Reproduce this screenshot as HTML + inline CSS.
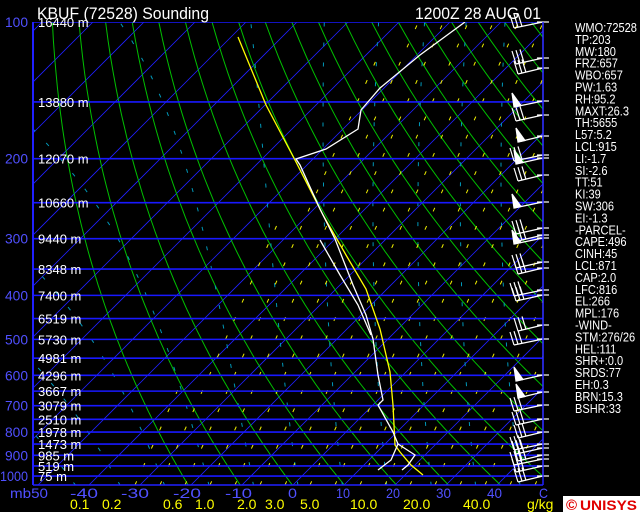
<!DOCTYPE html>
<html><head><meta charset="utf-8">
<style>
html,body{margin:0;padding:0;background:#000;width:640px;height:512px;overflow:hidden}
svg{display:block}
text{font-family:"Liberation Sans",sans-serif}
</style></head><body>
<svg id="s" width="640" height="512" viewBox="0 0 640 512" xmlns="http://www.w3.org/2000/svg">
<defs><clipPath id="c"><rect x="33" y="22" width="510" height="463"/></clipPath></defs>
<rect width="640" height="512" fill="#000"/>
<g id="grid" clip-path="url(#c)"></g>
<g id="prof" clip-path="url(#c)" fill="none" stroke-width="1.3">
<polyline stroke="#ffff00" points="238,37 266,105 296,162 323,215 346,255 366,289 380,329 390,372 393,405 395,445 400,452 411,465 423,475"/>
<polyline stroke="#fff" points="465,22 420,55 380,88 361,110 358,129 326,149 296,159 300,165 320,209 335,239 353,285 366,315 373,339 378,375 383,400 378,405 393,432 398,444 391,460 378,470"/>
<polyline stroke="#fff" points="320,240 340,275 358,305 371,335"/>
<polyline stroke="#fff" points="398,444 415,455 408,465 402,470"/>
</g>
<g id="wind" stroke="#fff" fill="none" stroke-width="1.2"></g>
<line x1="33" y1="22" x2="33" y2="485" stroke="#2020ff" stroke-width="2"/>
<line x1="33" y1="485" x2="543" y2="485" stroke="#2020ff" stroke-width="1.5"/>
<line x1="543" y1="22" x2="543" y2="485" stroke="#2020ff" stroke-width="1.5"/>
<g id="txt"></g>
<text x="37" y="19" fill="#fff" font-size="17" textLength="172" lengthAdjust="spacingAndGlyphs">KBUF (72528) Sounding</text>
<text x="415" y="19" fill="#fff" font-size="17" textLength="126" lengthAdjust="spacingAndGlyphs">1200Z 28 AUG 01</text>
<rect x="563" y="496" width="77" height="16" fill="#fff"/>
<text x="566" y="510" fill="#e00000" font-size="15" font-weight="bold" font-family="Liberation Serif">©</text>
<text x="580" y="510" fill="#e00000" font-size="14" font-weight="bold" font-family="Liberation Serif" textLength="57" lengthAdjust="spacingAndGlyphs">UNISYS</text>
</svg>
<script>
var NS="http://www.w3.org/2000/svg";
function el(p,t,a,tx){var e=document.createElementNS(NS,t);for(var k in a)e.setAttribute(k,a[k]);if(tx!=null)e.textContent=tx;p.appendChild(e);return e;}
var G=document.getElementById('grid'),T=document.getElementById('txt'),W=document.getElementById('wind');
function Y(p){return 22+197.2*Math.log(p/100);}
function X(t,p){return 293+5.1*t+(485-Y(p));}
function XG(tp,p){return -585.6+5.14*tp+0.524*(485-Y(p));}
function line(pts,c,w,dash){var s=pts.map(function(q){return q[0].toFixed(1)+","+q[1].toFixed(1)}).join(" ");var a={points:s,fill:"none",stroke:c,"stroke-width":w};if(dash)a["stroke-dasharray"]=dash;el(G,"polyline",a);}
// isotherms
for(var t=-140;t<=50;t+=10){line([[X(t,1050),Y(1050)],[X(t,100),Y(100)]],"#2020ff",0.8);}
// dry adiabats
for(var k=0;k<=30;k++){var th=148.6+10*k,pts=[];for(var p=1050;p>=100;p-=10){pts.push([XG(th*Math.pow(p/1000,0.286),p),Y(p)]);}line(pts,"#00c000",1);}
// moist adiabats
function es(tc){return 6.112*Math.exp(17.67*tc/(tc+243.5));}
for(var x0=40;x0<=540;x0+=45){var tp=(x0+585.6)/5.14/1.0132,tc=tp+150-273.15,pts=[];for(var p=1050;p>=100;p-=5){pts.push([XG(tc+273.15-150,p),Y(p)]);var tk=tc+273.15,e=es(tc),r=0.622*e/(p-e),L=2.5e6;var g=(287*tk+L*r)/(1004+L*L*r*0.622/(287*tk*tk))/p;tc-=g*5;if(tc<-120)break;}line(pts,"#0098b8",1,"4 16");}
// mixing ratio (yellow dashed)
for(var xb=60;xb<=760;xb+=25){
 var ytop=22;for(var y=485;y>=22;y--){var xl=xb+0.45*(485-y),bd=120+0.6*(485-y);if(xl<bd){ytop=y;break;}}
 if(ytop>=480)continue;
 line([[xb,485],[xb+0.45*(485-ytop),ytop]],"#f0f000",1,"4 16");}
// isobars & heights
var lv=[[100,"16440 m","100"],[150,"13880 m"],[200,"12070 m","200"],[250,"10660 m"],[300,"9440 m","300"],[350,"8348 m"],[400,"7400 m","400"],[450,"6519 m"],[500,"5730 m","500"],[550,"4981 m"],[600,"4296 m","600"],[650,"3667 m"],[700,"3079 m","700"],[750,"2510 m"],[800,"1978 m","800"],[850,"1473 m"],[900,"985 m","900"],[950,"519 m"],[1000,"75 m","1000"]];
lv.forEach(function(l){var y=Y(l[0]);el(G,"line",{x1:33,y1:y,x2:543,y2:y,stroke:"#1818ff","stroke-width":1.6});
el(T,"text",{x:38,y:y+5,fill:"#fff","font-size":13},l[1]);
if(l[2])el(T,"text",{x:l[2]=="1000"?0:5,y:y+5,fill:"#5050ff","font-size":14,textLength:l[2]=="1000"?28:23,lengthAdjust:"spacingAndGlyphs"},l[2]);});
// bottom labels
[["mb50",10,38],["-40",70,28],["-30",121,28],["-20",173,28],["-10",225,27],["0",288,9],["10",336,14],["20",386,14],["30",436,15],["40",487,15],["C",539,9]].forEach(function(a){el(T,"text",{x:a[1],y:498,fill:"#5050ff","font-size":14,textLength:a[2],lengthAdjust:"spacingAndGlyphs"},a[0]);});
[["0.1",70],["0.2",102],["0.6",163],["1.0",195],["2.0",237],["3.0",265],["5.0",300],["10.0",350],["20.0",403],["40.0",463],["g/kg",527]].forEach(function(a){el(T,"text",{x:a[1],y:509,fill:"#ffff00","font-size":14},a[0]);});
// right column
var R=["WMO:72528","TP:203","MW:180","FRZ:657","WBO:657","PW:1.63","RH:95.2","MAXT:26.3","TH:5655","L57:5.2","LCL:915","LI:-1.7","SI:-2.6","TT:51","KI:39","SW:306","EI:-1.3","-PARCEL-","CAPE:496","CINH:45","LCL:871","CAP:2.0","LFC:816","EL:266","MPL:176","-WIND-","STM:276/26","HEL:111","SHR+:0.0","SRDS:77","EH:0.3","BRN:15.3","BSHR:33"];
var RG=el(T,"g",{transform:"translate(575,0) scale(0.85,1)"});
R.forEach(function(s,i){el(RG,"text",{x:0,y:32+i*11.9,fill:"#fff","font-size":13},s);});
// wind staff + barbs
el(W,"line",{x1:543,y1:22,x2:543,y2:476});
var wy=[22,58,68,101,115,136,155,158,175,202,228,235,238,262,268,290,295,325,339,375,392,405,419,432,444,448,455,459,466,476];
var flag={3:1,5:1,7:1,9:1,12:1,19:1,20:1};
wy.forEach(function(y,i){el(W,"line",{x1:537,y1:y,x2:549,y2:y});
var bx=514+(i%3)*2,by=y+6;el(W,"line",{x1:543,y1:y,x2:bx,y2:by});
if(flag[i]){el(W,"polygon",{points:bx+","+by+" "+(bx+7)+","+(by-1.5)+" "+(bx-2)+","+(by-14),fill:"#fff"});}
else{for(var k=0;k<3;k++){el(W,"line",{x1:bx+k*4,y1:by-k*0.8,x2:bx+k*4-4,y2:by-k*0.8-13});}}});
</script>
</body></html>
